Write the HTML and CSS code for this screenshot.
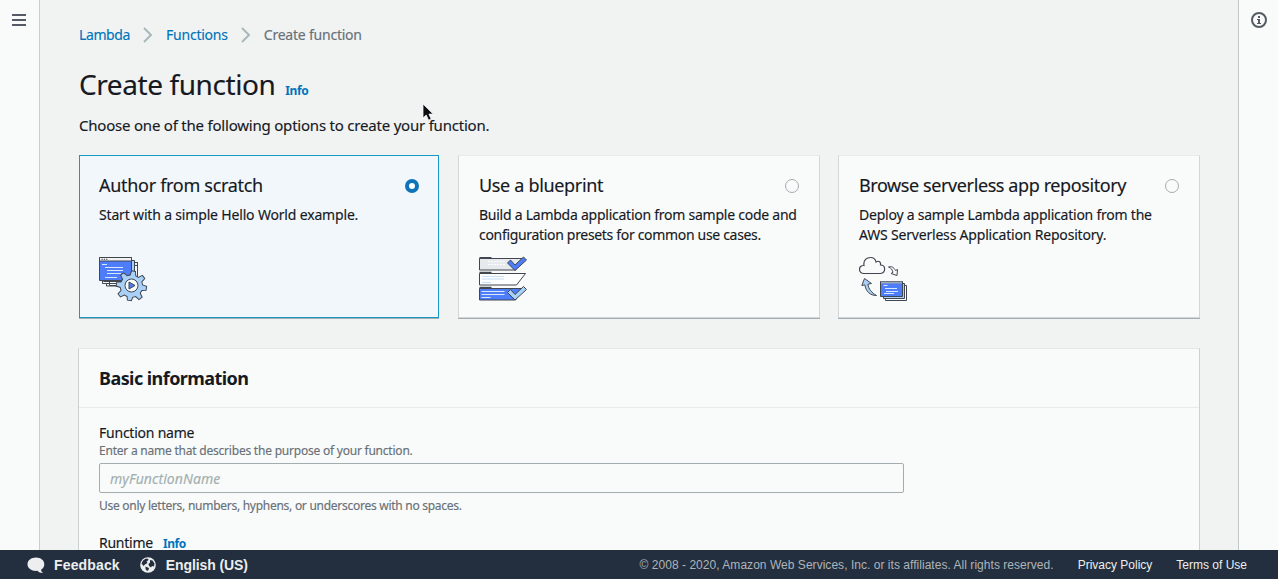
FILE: index.html
```html
<!DOCTYPE html>
<html lang="en">
<head>
<meta charset="utf-8">
<title>Create function</title>
<link rel="stylesheet" href="styles.css">
</head>
<body>
<div class="app">
  <div class="workspace">
    <aside class="rail rail-left">
      <svg class="menu-icon" width="14" height="12" viewBox="0 0 14 12"><path d="M0 1h14M0 6h14M0 11h14" stroke="#545b64" stroke-width="2"/></svg>
    </aside>
    <main class="main">
      <nav class="crumbs">
        <a class="crumb-lambda">Lambda</a>
        <svg class="chevron" width="10" height="16" viewBox="0 0 10 16"><path d="M1 1l7 7-7 7" fill="none" stroke="#aab7b8" stroke-width="2"/></svg>
        <a class="crumb-functions">Functions</a>
        <svg class="chevron" width="10" height="16" viewBox="0 0 10 16"><path d="M1 1l7 7-7 7" fill="none" stroke="#aab7b8" stroke-width="2"/></svg>
        <span class="crumb-current">Create function</span>
      </nav>
      <header class="heading"><h1>Create function</h1><a class="info">Info</a></header>
      <p class="lead">Choose one of the following options to create your function.</p>
      <section class="cards">
        <article class="card card-selected">
          <div class="card-head"><h2 class="t1">Author from scratch</h2><span class="radio radio-on"></span></div>
          <p class="d1">Start with a simple Hello World example.</p>
          <svg class="art" width="50" height="46" viewBox="0 0 50 46" stroke="#414750" stroke-width="1">
            <path d="M10.500 9.500h28v-3h-28zM10.500 6.500h28v23h-28zM3.500 25h20v2.500h-20zM7.500 27.500h16v2.500h-16z" fill="#f9fbfa"/>
            <path d="M5 4.500h30.500v21H5z" fill="#a9d1f7"/>
            <path d="M.5 1.500h32v23H.5z" fill="#4d7df8"/>
            <path d="M.5 1.500h32v3.500H.5z" fill="#f0f2f3"/>
            <path d="M2.500 3.300h1.300m1 0h1.300m1 0h1.300"/>
            <path d="M3 8.500h5M6 11.500h18M8 14.500h16M8 17.500h14M6 21.500h12" stroke="#d8e9ff"/>
            <g transform="translate(32.500 29.500)">
              <path d="M-2-14.500h4l.8 4.300 2.900 1.200 3.700-2.500 2.800 2.800-2.500 3.700 1.200 2.900 4.200.8v4l-4.200.8-1.200 2.900 2.500 3.700-2.800 2.800-3.700-2.500-2.900 1.200-.8 3.500h-4l-.8-3.500-2.900-1.200-3.700 2.500-2.800-2.800 2.500-3.700-1.200-2.900-4.200-.8v-4l4.200-.8 1.200-2.900-2.500-3.700 2.800-2.800 3.700 2.500 2.900-1.200z" fill="#a9d1f7" transform="rotate(8)"/>
              <circle r="6.500" fill="#f9fbfa"/><path d="M-2.500-3.500v7l6-3.500z" fill="#4d7df8"/>
            </g>
          </svg>
        </article>
        <article class="card">
          <div class="card-head"><h2 class="t2">Use a blueprint</h2><span class="radio"></span></div>
          <p><span class="d2">Build a Lambda application from sample code and</span><br><span class="d2b">configuration presets for common use cases.</span></p>
          <svg class="art" width="50" height="46" viewBox="0 0 50 46" stroke="#414750" stroke-width="1" fill="none">
            <path d="M.5 2.500h44l-8 11.500H.5z" fill="#e7eaec"/>
            <path d="M.5 17.500h46l-9 11.500H.5z" fill="#fbfdfe"/>
            <path d="M.5 32.500h44l-8 11.500H.5z" fill="#4d7df8"/>
            <path d="M.5 2h12M.5 16.800h12M.5 31.800h12" stroke-width="2"/>
            <path d="M9 5.500h17M9 8.500h17" stroke="#fff" stroke-dasharray="2 1"/>
            <path d="M3 20.500h22M3 23h22M3 26.500h9" stroke="#c6e0fa"/>
            <path d="M2.500 35.500h23M2.500 38.500h23M2.500 41.500h9" stroke="#d8e9ff"/>
            <path d="M28.500 7l3-3 4.500 5L44.500 1l3 3L36 14.500z" fill="#4d7df8"/>
            <path d="M28.500 36.500l3-3 4.500 5L44.500 30.500l3 3L36 44z" fill="#a9d1f7"/>
          </svg>
        </article>
        <article class="card">
          <div class="card-head"><h2 class="t3">Browse serverless app repository</h2><span class="radio"></span></div>
          <p><span class="d3">Deploy a sample Lambda application from the</span><br><span class="d3b">AWS Serverless Application Repository.</span></p>
          <svg class="art" width="50" height="46" viewBox="0 0 50 46" stroke="#414750" stroke-width="1" fill="none">
            <path d="M5 17.500C-1 17-1 9 5 9.500 4 4 8 1.500 11.500 1.500c3 0 5 2 5.500 4.500 3-2 5 .5 4.500 3 5.500 0 5.500 8 0 8.500z" stroke-width="1.200"/>
            <path d="M29.500 11c3-1 5 0 7 3.500l2-1-.5 6-6-2 2-1.200C33 13 32 12 29.500 11z" fill="#f9fbfa"/>
            <path d="M5.500 22.500l7 5-3.700.7c1 5 3.700 8.500 8.700 11.300-6.500 0-10.500-4-11.700-10.700l-3 .7z" fill="#a9d1f7"/>
            <path d="M26.500 29.500h21v15h-21z" fill="#f9fbfa"/>
            <path d="M24.500 27.500h21v15h-21z" fill="#a9d1f7"/>
            <path d="M21.500 25.500h22v15h-22z" fill="#4d7df8"/>
            <path d="M22 26.500h21" stroke="#9ba7b5" stroke-width="2"/>
            <path d="M24.500 29.500h4M26 32.500h12M27 35.500h12M25 37.500h10" stroke="#d8e9ff"/>
          </svg>
        </article>
      </section>
      <section class="panel">
        <header class="panel-head"><h3>Basic information</h3></header>
        <div class="panel-body">
          <div class="label"><span class="fname">Function name</span></div>
          <div class="hint"><span class="h1t">Enter a name that describes the purpose of your function.</span></div>
          <div class="field"><span>myFunctionName</span></div>
          <div class="hint hint-bottom"><span class="h2t">Use only letters, numbers, hyphens, or underscores with no spaces.</span></div>
          <div class="label runtime"><span class="rtime">Runtime</span><a class="info">Info</a></div>
        </div>
      </section>
      <svg class="cursor" width="14" height="20" viewBox="0 0 14 20"><path d="M1 1v14l3.200-3 2.400 5.200 2.600-1.100-2.300-5h4.300z" fill="#0c0d10" stroke="#f4f5f5" stroke-width=".8"/></svg>
    </main>
    <aside class="rail rail-right">
      <svg class="info-icon" width="16" height="16" viewBox="0 0 16 16"><circle cx="8" cy="8" r="7" fill="none" stroke="#545b64" stroke-width="2"/><path d="M7 4h2v2H7zM6 7h3v4h1v1H6v-1h1V8H6z" fill="#545b64"/></svg>
    </aside>
  </div>
  <footer class="footer">
    <svg class="bubble" width="18" height="17" viewBox="0 0 18 17"><path d="M9 .5c4.700 0 8.300 2.800 8.300 6.700 0 2.500-1.300 4.300-3.300 5.500.1 1.400.9 2.500 2.300 3.300-2.400.2-4.400-.6-5.900-2.200C5 14.400.5 11.500.5 7.200.5 3.300 4.300.5 9 .5z" fill="#eceeef"/></svg>
    <span class="feedback">Feedback</span>
    <svg class="globe" width="16" height="16" viewBox="0 0 16 16"><circle cx="8" cy="8" r="7.800" fill="#eceeef"/><path d="M1.500 6.500L3 3.500l3-2L8.500 2 8 3.500 6.500 4.500 7.500 6 5 7.500 3.500 9zM10 3l2.500.5 2 3-.5 3-2-.5-1 1.500L9 9l-.5-2L10 5.500zM5.500 9.500L9 11l-.5 2L7 14 5.500 12z" fill="#232f3e"/></svg>
    <span class="lang">English (US)</span>
    <span class="copy">© 2008 - 2020, Amazon Web Services, Inc. or its affiliates. All rights reserved.</span>
    <span class="privacy">Privacy Policy</span>
    <span class="terms">Terms of Use</span>
  </footer>
</div>
</body>
</html>
```
FILE: styles.css
```css
* { box-sizing: border-box; }
body { margin: 0; font-family: "Noto Sans", sans-serif; font-size: 14px; line-height: 20px; color: #16191f; }
h1, h2, h3, p { margin: 0; font-weight: 400; }
.app { height: 579px; display: flex; flex-direction: column; background: #f1f3f3; white-space: nowrap; }
.workspace { height: 550px; flex: none; display: flex; -webkit-text-stroke: .15px; }
.rail { width: 40px; flex: none; background: #f9fbfa; }
.rail-left { border-right: 1px solid #c9cdcf; padding: 14px 0 0 12px; }
.rail-right { border-left: 1px solid #c3c8cb; padding: 12px 0 0 12px; }
.rail svg { display: block; }
.main { flex: 1; position: relative; min-width: 0; padding: 25px 38px 0 39px; }
.crumbs { display: flex; align-items: center; height: 20px; color: #687078; }
.crumb-lambda { letter-spacing: -.4px; }
.crumb-functions { letter-spacing: -.22px; }
.crumb-current { letter-spacing: -.22px; }
a { color: #0073bb; }
.chevron { margin: 0 13px; }
.heading { display: flex; align-items: baseline; height: 36px; margin-top: 21px; }
h1 { font-size: 28px; line-height: 36px; letter-spacing: -.42px; }
.info { font-size: 12px; font-weight: 700; margin-left: 10px; letter-spacing: -.4px; -webkit-text-stroke: 0; }
.lead { margin-top: 13px; font-size: 15px; letter-spacing: -.21px; }
.cards { display: grid; grid-template-columns: 361px 362px 362px; column-gap: 18px; margin-top: 20px; }
.card { height: 163px; padding: 20px 20px 0; background: #f9fbfa; border: 1px solid #e8ebeb; border-right-color: #d2d6d7; border-left-color: #d2d6d7; border-bottom-color: #d2d6d7; box-shadow: 0 1px 0 #a4adb1; }
.card-selected { margin-right: 1px; padding: 20px 19px 0; background: #f2f7fb; border-color: #1a98c4; }
.card-head { display: flex; justify-content: space-between; align-items: center; height: 20px; }
h2 { font-size: 18px; line-height: 20px; padding-bottom: 2px; }
.t1 { letter-spacing: -.3px; }
.t2 { letter-spacing: -.33px; }
.t3 { letter-spacing: -.4px; }
.d1 { letter-spacing: -.17px; }
.d2 { letter-spacing: -.25px; }
.d2b { letter-spacing: -.32px; }
.d3 { letter-spacing: -.23px; }
.d3b { letter-spacing: -.19px; }
.card p { margin-top: 9px; height: 40px; }
.radio { width: 14px; height: 14px; border: 1px solid #a3adb0; border-radius: 50%; }
.radio-on { border: 4px solid #0e73b8; background: #fff; }
.art { display: block; margin-top: 11px; }
.panel { margin: 30px 0 0 -1px; height: 202px; background: #f9fbfa; border: 1px solid #e3e7e7; border-left-color: #cbd0d2; border-right-color: #cbd0d2; border-bottom: 0; }
.panel-head { height: 59px; padding: 19px 20px 0; border-bottom: 1px solid #e7ebeb; }
h3 { font-size: 18px; font-weight: 700; letter-spacing: -.56px; -webkit-text-stroke: 0; }
.panel-body { padding: 15px 20px 0; }
.label { height: 20px; }
.fname { letter-spacing: -.23px; }
.rtime { letter-spacing: -.25px; }
.hint { font-size: 12px; line-height: 16px; color: #687078; }
.h1t { letter-spacing: -.22px; }
.h2t { letter-spacing: -.27px; }
.field { width: 805px; height: 30px; margin-top: 4px; padding: 5px 10px; border: 1px solid #a3adb0; border-radius: 2px; line-height: 20px; font-style: italic; letter-spacing: .07px; color: #a3afb0; }
.hint-bottom { margin-top: 5px; }
.runtime { margin-top: 22px; height: 14px; line-height: 14px; }
.cursor { position: absolute; left: 382px; top: 103px; }
.footer { height: 29px; flex: none; display: flex; align-items: center; padding: 1px 31px 0 27px; background: #232f3e; color: #eceeef; font: 12px/28px "Liberation Sans", Arial, sans-serif; }
.feedback, .lang { font-size: 14px; font-weight: 700; }
.feedback { margin-left: 9px; letter-spacing: .15px; }
.globe { margin-left: 20px; }
.lang { margin-left: 10px; letter-spacing: -.1px; }
.copy { margin-left: auto; letter-spacing: .035px; color: #aeb4ba; }
.privacy, .terms { margin-left: 24px; }
```
